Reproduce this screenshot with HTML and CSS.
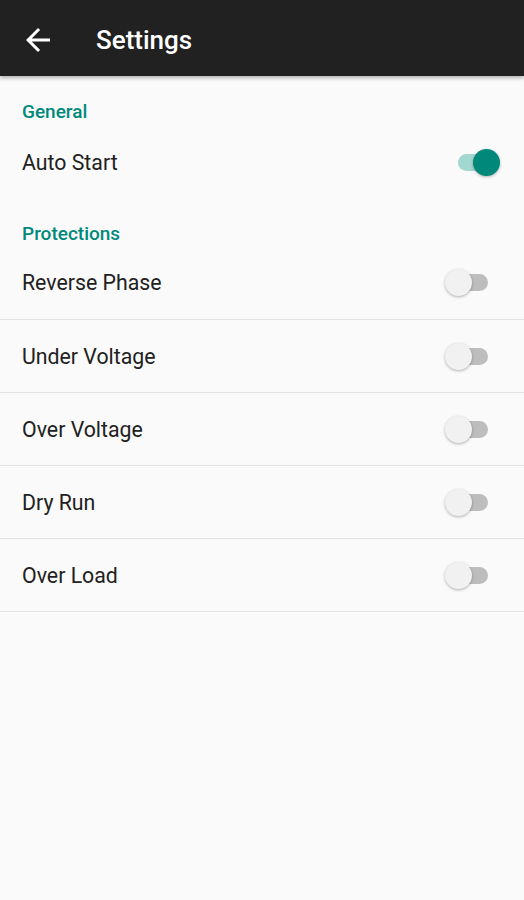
FILE: index.html
```html
<!DOCTYPE html>
<html lang="en">
  <head>
    <meta charset="UTF-8" />
    <meta name="viewport" content="width=device-width, initial-scale=1.0" />
    <title>Settings</title>
    <link rel="stylesheet" href="styles.css">
  </head>
  <body>
    <header class="toolbar">
      <button class="back" aria-label="back">
        <svg viewBox="0 0 24 24">
          <path d="M20 11H7.83l5.59-5.59L12 4l-8 8 8 8 1.41-1.41L7.83 13H20v-2z" />
        </svg>
      </button>
      <h1>Settings</h1>
    </header>
    <main>
      <h2 class="category">General</h2>
      <div class="pref pref-plain">
        <span>Auto Start</span>
        <span class="switch on"></span>
      </div>

      <h2 class="category category-next">Protections</h2>
      <div class="pref pref-first">
        <span>Reverse Phase</span>
        <span class="switch"></span>
      </div>
      <div class="pref">
        <span>Under Voltage</span>
        <span class="switch"></span>
      </div>
      <div class="pref">
        <span>Over Voltage</span>
        <span class="switch"></span>
      </div>
      <div class="pref">
        <span>Dry Run</span>
        <span class="switch"></span>
      </div>
      <div class="pref">
        <span>Over Load</span>
        <span class="switch"></span>
      </div>
    </main>
  </body>
</html>
```

FILE: styles.css
```css
body {
  margin: 0;
  background-color: #fafafa;
  font-family: Roboto, "Noto Sans", sans-serif;
  color: #212121;
  height: 900px;
}
.toolbar {
  display: flex;
  align-items: center;
  box-sizing: border-box;
  height: 76px;
  padding-top: 4px;
  background-color: #212121;
  box-shadow: 0 2px 4px rgba(0, 0, 0, 0.3);
  position: relative;
}
.back {
  background: transparent;
  border: none;
  padding: 0;
  margin: 0 0 0 20px;
  width: 36px;
  height: 36px;
  display: flex;
}
.back svg {
  width: 36px;
  height: 36px;
  fill: white;
}
h1 {
  margin: 0 0 0 40px;
  font-size: 26px;
  font-weight: 500;
  color: white;
}
.category {
  margin: 0;
  padding: 24px 22px 0;
  line-height: 24px;
  font-size: 19px;
  font-weight: 500;
  color: #00897b;
}
.category-next {
  padding-top: 22px;
}
.pref {
  display: flex;
  align-items: center;
  justify-content: space-between;
  height: 72px;
  padding: 0 36px 0 22px;
  font-size: 21.3px;
  border-bottom: 1px solid #e2e2e2;
}
.pref-first {
  height: 73px;
}
.pref-plain {
  height: 76px;
  border-bottom: none;
}
.switch {
  position: relative;
  width: 32px;
  height: 17px;
  border-radius: 9px;
  background-color: #bdbdbd;
}
.switch::after {
  content: "";
  position: absolute;
  top: -5px;
  left: -11px;
  width: 27px;
  height: 27px;
  border-radius: 50%;
  background-color: #f1f1f1;
  box-shadow: 0 1px 3px rgba(0, 0, 0, 0.3);
}
.switch.on {
  background-color: #a3d8d0;
  margin-right: -2px;
}
.switch.on::after {
  left: 15px;
  background-color: #00897b;
}
```
